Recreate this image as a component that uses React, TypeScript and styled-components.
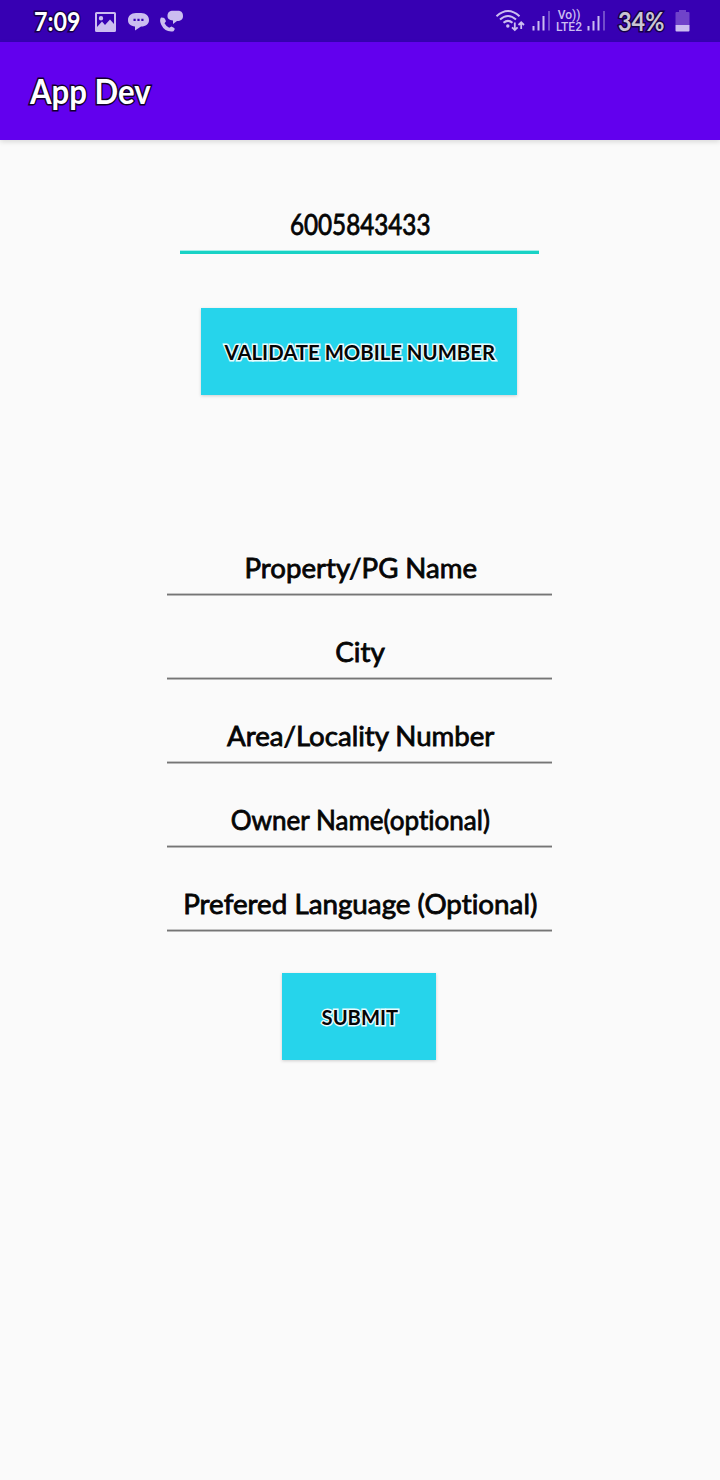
import React from 'react';
import styled, { createGlobalStyle } from 'styled-components';

const GlobalStyle = createGlobalStyle`
  * { box-sizing: border-box; }
  body { margin: 0; background: #fafafa; font-family: Lato, 'Open Sans', sans-serif; }
`;

const Screen = styled.div`
  width: 720px;
  height: 1480px;
  display: flex;
  flex-direction: column;
  background: #fafafa;
  overflow: hidden;
`;

const StatusBar = styled.header`
  height: 42px;
  flex: none;
  display: flex;
  justify-content: space-between;
  padding: 0 30px 0 34px;
  background: #3700b3;
`;

const StatusGroup = styled.div`
  display: flex;
  align-items: center;
  svg { display: block; flex: none; }
`;

const Label = styled.span<{ $size: number; $stretch?: number; $origin?: string; $color?: string; $outline?: string; $weight?: number }>`
  display: block;
  white-space: nowrap;
  font-size: ${p => p.$size}px;
  line-height: 34px;
  font-variant-ligatures: none;
  font-weight: ${p => p.$weight ?? 400};
  color: ${p => p.$color ?? '#050505'};
  transform: scaleX(${p => p.$stretch ?? 1});
  transform-origin: ${p => p.$origin ?? 'center'};
  -webkit-text-stroke: ${p => (p.$outline ? `3px ${p.$outline}` : '0.8px #050505')};
  paint-order: stroke fill;
`;

const AppBar = styled.div`
  height: 98px;
  flex: none;
  display: flex;
  align-items: center;
  padding: 0 30px;
  background: #6200ee;
  box-shadow: 0 2px 5px rgba(0, 0, 0, 0.13);
`;

const Content = styled.main`
  display: flex;
  flex-direction: column;
  align-items: center;
  padding-right: 1px;
`;

const Field = styled.div<{ $active?: boolean }>`
  width: ${p => (p.$active ? 359 : 385)}px;
  height: 50px;
  margin-top: ${p => (p.$active ? 64 : 34)}px;
  padding: ${p => (p.$active ? 3 : 5)}px 0 0 2px;
  display: flex;
  justify-content: center;
  border-bottom: ${p => (p.$active ? '3px solid #18d2c5' : '1px solid #b9b9b9')};
  box-shadow: ${p => (p.$active ? 'inset 0 -1px #a5f0ea' : 'inset 0 -1px #757575, inset 0 -2px #c4c4c4')};
`;

const Form = styled.form`
  display: flex;
  flex-direction: column;
  align-items: center;
  margin-top: 117px;
`;

const Button = styled.button<{ $width: number; $top: number }>`
  width: ${p => p.$width}px;
  height: 87px;
  margin: ${p => p.$top}px 1px 0 0;
  padding: 1px 0 0 2px;
  border: 0;
  display: flex;
  align-items: center;
  justify-content: center;
  font-family: inherit;
  background: #26d4eb;
  box-shadow: 0 1px 3px rgba(0, 0, 0, 0.18);
`;

const fields = [
  { text: 'Property/PG Name', stretch: 1.022 },
  { text: 'City', stretch: 1.03 },
  { text: 'Area/Locality Number', stretch: 1.023 },
  { text: 'Owner Name(optional)', stretch: 0.965 },
  { text: 'Prefered Language (Optional)', stretch: 1.028 },
];

const LeftIcons = () => (
  <svg width="90" height="24" viewBox="94 9 90 24" fill="#cbbdf0">
    <path fillRule="evenodd" d="M96.500 12H114.500Q116 12 116 13.500V30.500Q116 32 114.500 32H96.500Q95 32 95 30.500V13.500Q95 12 96.500 12ZM97 14V27L102 21.500L105 25L110 19.500L114 24V14ZM101 16a2.200 2.200 0 1 1 0 4.400a2.200 2.200 0 1 1 0-4.400Z" />
    <path fillRule="evenodd" d="M136 13H141C146 13 149 16 149 20C149 24 146 26.500 141 26.500L135 30.500V26.500C130.500 26 128 24 128 20C128 16 131 13 136 13ZM133.500 18.800v2.200h2.200v-2.200ZM137.400 18.800v2.200h2.200v-2.200ZM141.300 18.800v2.200h2.200v-2.200Z" />
    <path d="M173 10.800H178C181.500 10.800 183 13 183 16C183 19.500 181 21 177 21L173 24V20.500C169 20 167.500 18.500 167.500 16C167.500 12.500 169.500 10.800 173 10.800Z" />
    <path d="M161 17.500L163.500 17.800Q164.500 18 165 19L166 21.200L164.500 23.200Q166 26 169.200 27.800L171.500 26.500L174.200 28Q175 28.600 174.500 29.800L173.500 31.300Q165 32.500 161.400 25Q159 20.500 161 17.500Z" />
  </svg>
);

const Wifi = () => (
  <svg width="30" height="24" viewBox="495 9 30 24" fill="none" stroke="#cbbdf0" strokeWidth="2">
    <path d="M496.500 16.200Q508 5.800 519.500 16.200M500 19.600Q508 12.400 516 19.600M503.500 22.800Q508 19 512.500 22.800" />
    <circle cx="507.800" cy="26" r="1.700" fill="#cbbdf0" stroke="none" />
    <path strokeWidth="1.800" d="M514.800 22.500V30M512 27.300L514.800 30L517.600 27.300M521.200 29V22.500M518.500 25L521.200 22.300L524 25" />
  </svg>
);

const Signal = () => (
  <svg width="19" height="22" viewBox="0 0 19 22" fill="#cbbdf0">
    <rect x="0.500" y="16" width="2" height="4.500" />
    <rect x="5.500" y="11" width="2" height="9.500" />
    <rect x="10.500" y="6" width="2" height="14.500" />
    <rect x="16" y="1" width="2" height="19.500" opacity=".4" />
  </svg>
);

const Lte = styled.div`
  width: 28px;
  height: 24px;
  margin: 0 4px;
  font: 500 12px/12px Roboto, sans-serif;
  color: #cbbdf0;
  white-space: nowrap;
  display: flex;
  flex-direction: column;
  align-items: center;
`;

const Battery = () => (
  <svg width="15" height="22" viewBox="0 0 15 22">
    <path d="M4 0H11V2H13.500Q14.500 2 14.500 3V15H0.500V3Q0.500 2 1.500 2H4Z" fill="#7043ca" />
    <path d="M0.500 15H14.500V20.500Q14.500 21.500 13.500 21.500H1.500Q.5 21.500 .5 20.500Z" fill="#cbbdf0" />
  </svg>
);

const Gap = styled.i<{ $w: number }>`
  flex: none;
  width: ${p => p.$w}px;
`;

const Clock = styled.div`
  width: 60px;
`;

const BatteryLevel = styled.div`
  width: 57px;
  padding-left: 0;
`;

export default function App() {
  return (
    <Screen>
      <GlobalStyle />
      <StatusBar>
        <StatusGroup>
          <Clock>
            <Label $size={27} $stretch={0.86} $origin="left" $color="#fff" $outline="#160047" $weight={700}>7:09</Label>
          </Clock>
          <LeftIcons />
        </StatusGroup>
        <StatusGroup>
          <Wifi />
          <Gap $w={7} />
          <Signal />
          <Lte><div>Vo))</div><div>LTE2</div></Lte>
          <Signal />
          <Gap $w={12} />
          <BatteryLevel>
            <Label $size={26} $stretch={0.9} $origin="left" $color="#c9c5d2" $outline="#160047" $weight={700}>34%</Label>
          </BatteryLevel>
          <Battery />
        </StatusGroup>
      </StatusBar>
      <AppBar>
        <Label $size={34} $stretch={0.915} $origin="left" $color="#fff" $outline="#12002d" $weight={700}>App Dev</Label>
      </AppBar>
      <Content>
        <Field $active><Label $size={28} $stretch={0.865}>6005843433</Label></Field>
        <Button $width={316} $top={54}>
          <Label $size={21} $stretch={0.968} $outline="#e9fbfd" $weight={700}>VALIDATE MOBILE NUMBER</Label>
        </Button>
        <Form>
          {fields.map(f => (
            <Field key={f.text}><Label $size={27} $stretch={f.stretch}>{f.text}</Label></Field>
          ))}
          <Button type="button" $width={154} $top={41}>
            <Label $size={21} $stretch={0.96} $outline="#e9fbfd" $weight={700}>SUBMIT</Label>
          </Button>
        </Form>
      </Content>
    </Screen>
  );
}
